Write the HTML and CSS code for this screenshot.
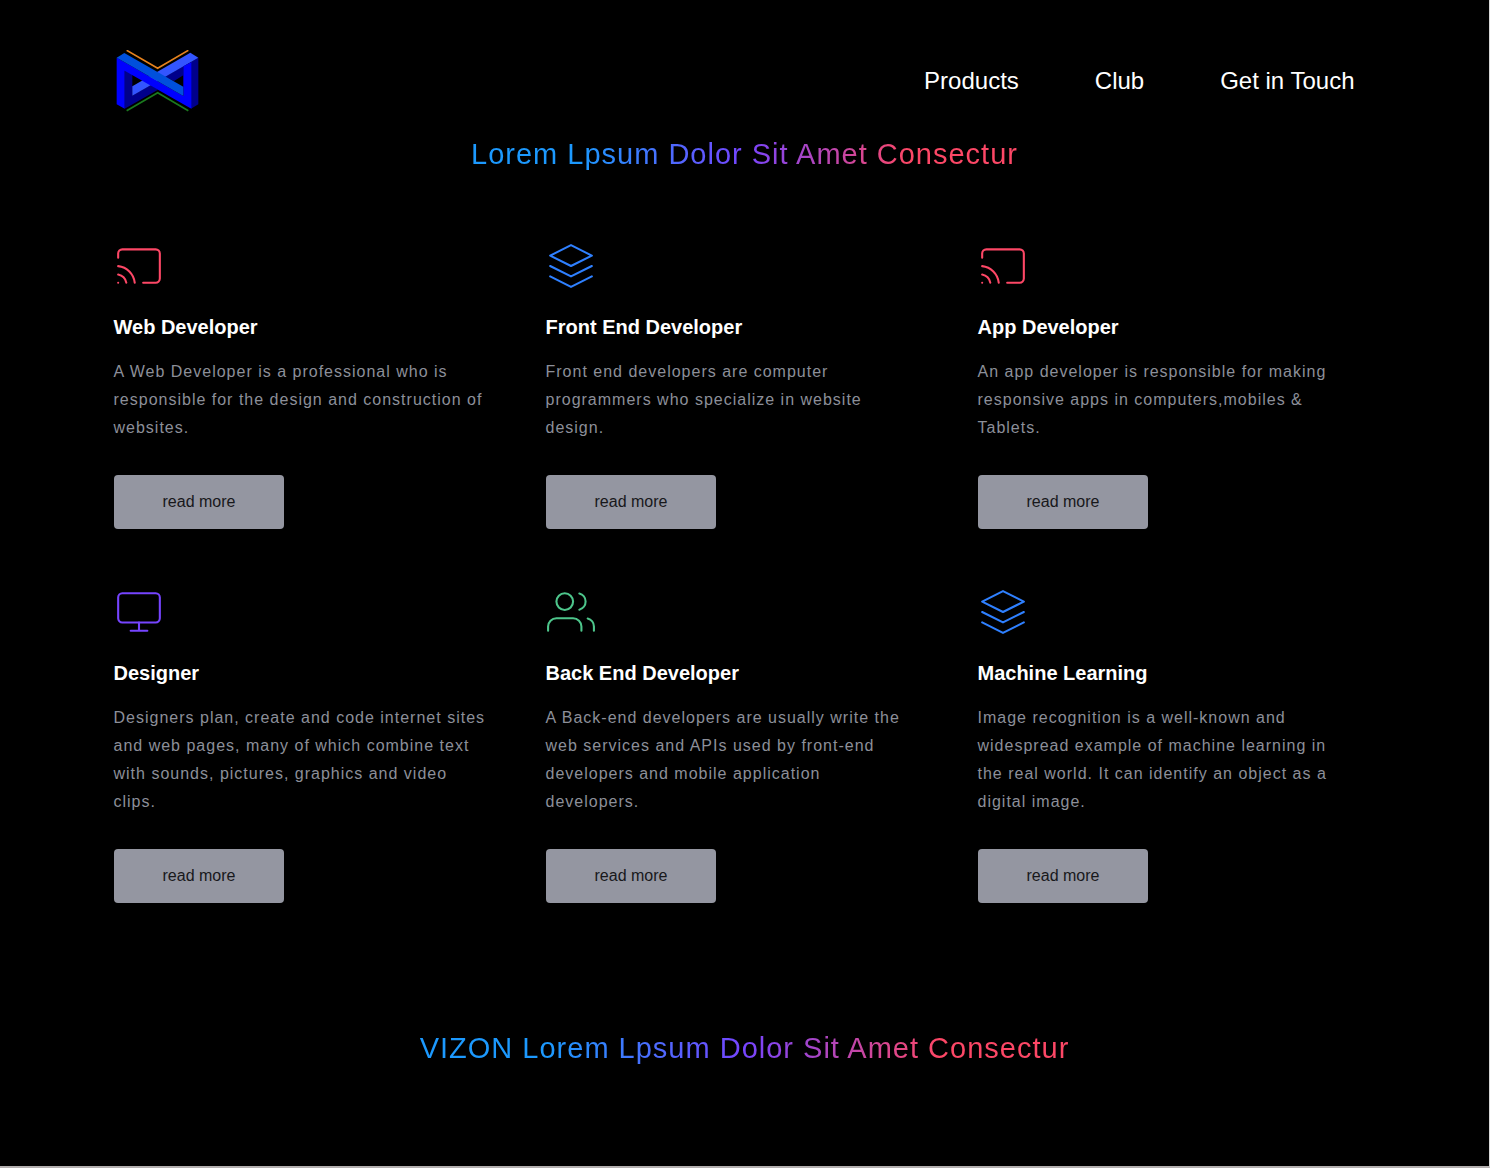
FILE: index.html
```html
<!DOCTYPE html>
<html lang="en">
<head>
<meta charset="utf-8">
<meta name="viewport" content="width=device-width, initial-scale=1">
<title>Vizon</title>
<link rel="stylesheet" href="styles.css">
</head>
<body>
<svg class="sprite" aria-hidden="true">
  <symbol id="cast" viewBox="0 0 24 24"><path d="M2 16.1A5 5 0 0 1 5.9 20M2 12.05A9 9 0 0 1 9.95 20M2 8V6a2 2 0 0 1 2-2h16a2 2 0 0 1 2 2v12a2 2 0 0 1-2 2h-6M2 20h.01"/></symbol>
  <symbol id="layers" viewBox="0 0 24 24"><path d="M12 2 2 7l10 5 10-5-10-5zM2 17l10 5 10-5M2 12l10 5 10-5"/></symbol>
  <symbol id="monitor" viewBox="0 0 24 24"><rect x="2" y="3" width="20" height="14" rx="2"/><path d="M8 21h8M12 17v4"/></symbol>
  <symbol id="users" viewBox="0 0 24 24"><path d="M17 21v-2a4 4 0 0 0-4-4H5a4 4 0 0 0-4 4v2M23 21v-2a4 4 0 0 0-3-3.87M16 3.13a4 4 0 0 1 0 7.75"/><circle cx="9" cy="7" r="4"/></symbol>
</svg>
<div class="page">
  <header class="header">
    <a class="brand" href="#" aria-label="Vizon home">
      <svg class="logo" viewBox="48 45 252 186" aria-hidden="true">
        <path fill="#00008b" d="M74 105l23 13v64l55-32 22 14-100 57zM196 125l54-31v27l-28 17zM273 81l22-13v140l-22 13z"/>
        <path fill="#3355ff" d="M271 53l24 15-22 13-176 101v-28z"/>
        <path fill="#0000ff" d="M50 68l24 14 176 101V94l24-13v140L74 107v114l-24-13z"/>
        <path fill="#0050dc" d="M50 68l23-14 177 101v28L74 82z"/>
        <path fill="none" stroke="#e5821e" stroke-width="5" d="M80 46l93 54 92-54"/>
        <path fill="none" stroke="#1a7a1e" stroke-width="5" d="M80 227l93-54 92 54"/>
      </svg>
    </a>
    <nav class="nav" aria-label="Main">
      <a href="#">Products</a>
      <a href="#">Club</a>
      <a href="#">Get in Touch</a>
    </nav>
  </header>
  <main>
    <h1 class="headline">Lorem Lpsum Dolor Sit Amet Consectur</h1>
    <section class="cards">
      <article class="card">
        <svg class="icon red" aria-hidden="true"><use href="#cast"/></svg>
        <h2>Web Developer</h2>
        <p>A Web Developer is a professional who is responsible for the design and construction of websites.</p>
        <button type="button">read more</button>
      </article>
      <article class="card">
        <svg class="icon blue" aria-hidden="true"><use href="#layers"/></svg>
        <h2>Front End Developer</h2>
        <p>Front end developers are computer programmers who specialize in website design.</p>
        <button type="button">read more</button>
      </article>
      <article class="card">
        <svg class="icon red" aria-hidden="true"><use href="#cast"/></svg>
        <h2>App Developer</h2>
        <p>An app developer is responsible for making responsive apps in computers,mobiles &amp; Tablets.</p>
        <button type="button">read more</button>
      </article>
      <article class="card">
        <svg class="icon purple" aria-hidden="true"><use href="#monitor"/></svg>
        <h2>Designer</h2>
        <p>Designers plan, create and code internet sites and web pages, many of which combine text with sounds, pictures, graphics and video clips.</p>
        <button type="button">read more</button>
      </article>
      <article class="card">
        <svg class="icon green" aria-hidden="true"><use href="#users"/></svg>
        <h2>Back End Developer</h2>
        <p>A Back-end developers are usually write the web services and APIs used by front-end developers and mobile application developers.</p>
        <button type="button">read more</button>
      </article>
      <article class="card">
        <svg class="icon blue" aria-hidden="true"><use href="#layers"/></svg>
        <h2>Machine Learning</h2>
        <p>Image recognition is a well-known and widespread example of machine learning in the real world. It can identify an object as a digital image.</p>
        <button type="button">read more</button>
      </article>
    </section>
  </main>
  <footer class="footer">
    <p class="headline">VIZON Lorem Lpsum Dolor Sit Amet Consectur</p>
  </footer>
</div>
</body>
</html>
```
FILE: styles.css
```css
* { box-sizing: border-box; margin: 0; padding: 0; }

body {
  background: #fff;
  color: #fff;
  font-family: "Liberation Sans", Arial, sans-serif;
}

.sprite { display: none; }

.page {
  background: #000;
  border-right: 1px solid #d8d8d8;
  border-bottom: 2px solid #b4b0b0;
  padding: 48px 24px 98px;
}

.header,
.cards {
  max-width: 1262px;
  margin: 0 auto;
}

.header {
  display: flex;
  justify-content: space-between;
  align-items: center;
  padding: 0 21px 0 2px;
}

.brand { display: block; padding: 2px 0; }
.logo { display: block; width: 84px; height: 62px; }

.nav { display: flex; flex-wrap: wrap; gap: 76px; }
.nav a {
  color: #fff;
  font-size: 24px;
  line-height: 32px;
  text-decoration: none;
}

.headline {
  width: fit-content;
  margin: 0 auto;
  font-size: 29px;
  font-weight: 400;
  line-height: 40px;
  letter-spacing: 1px;
  color: transparent;
  background: linear-gradient(90deg, #1c99fe 20%, #7644ff 50%, #fd4766 80%);
  -webkit-background-clip: text;
  background-clip: text;
}

main .headline { margin-top: 20px; }

.cards {
  display: grid;
  grid-template-columns: repeat(auto-fit, minmax(300px, 1fr));
  gap: 58px 60px;
  padding: 67px 26px 0 0;
}

.icon {
  display: block;
  width: 50px;
  height: 50px;
  fill: none;
  stroke: currentColor;
  stroke-width: 1;
  stroke-linecap: round;
  stroke-linejoin: round;
}

.red { color: #fd4766; }
.blue { color: #2f80ff; }
.purple { color: #7644ff; }
.green { color: #4dc58b; }

.card h2 {
  margin: 23px 0 18px;
  font-size: 20px;
  line-height: 26px;
}

.card p {
  margin-bottom: 33px;
  color: #8c8f99;
  font-size: 16px;
  line-height: 28px;
  letter-spacing: 1px;
}

.card button {
  padding: 16px 49px;
  border: 0;
  border-radius: 4px;
  background: #9496a1;
  color: #18181b;
  font: 16px/22px "Liberation Sans", Arial, sans-serif;
  cursor: pointer;
}

.footer { padding-top: 125px; }
```
